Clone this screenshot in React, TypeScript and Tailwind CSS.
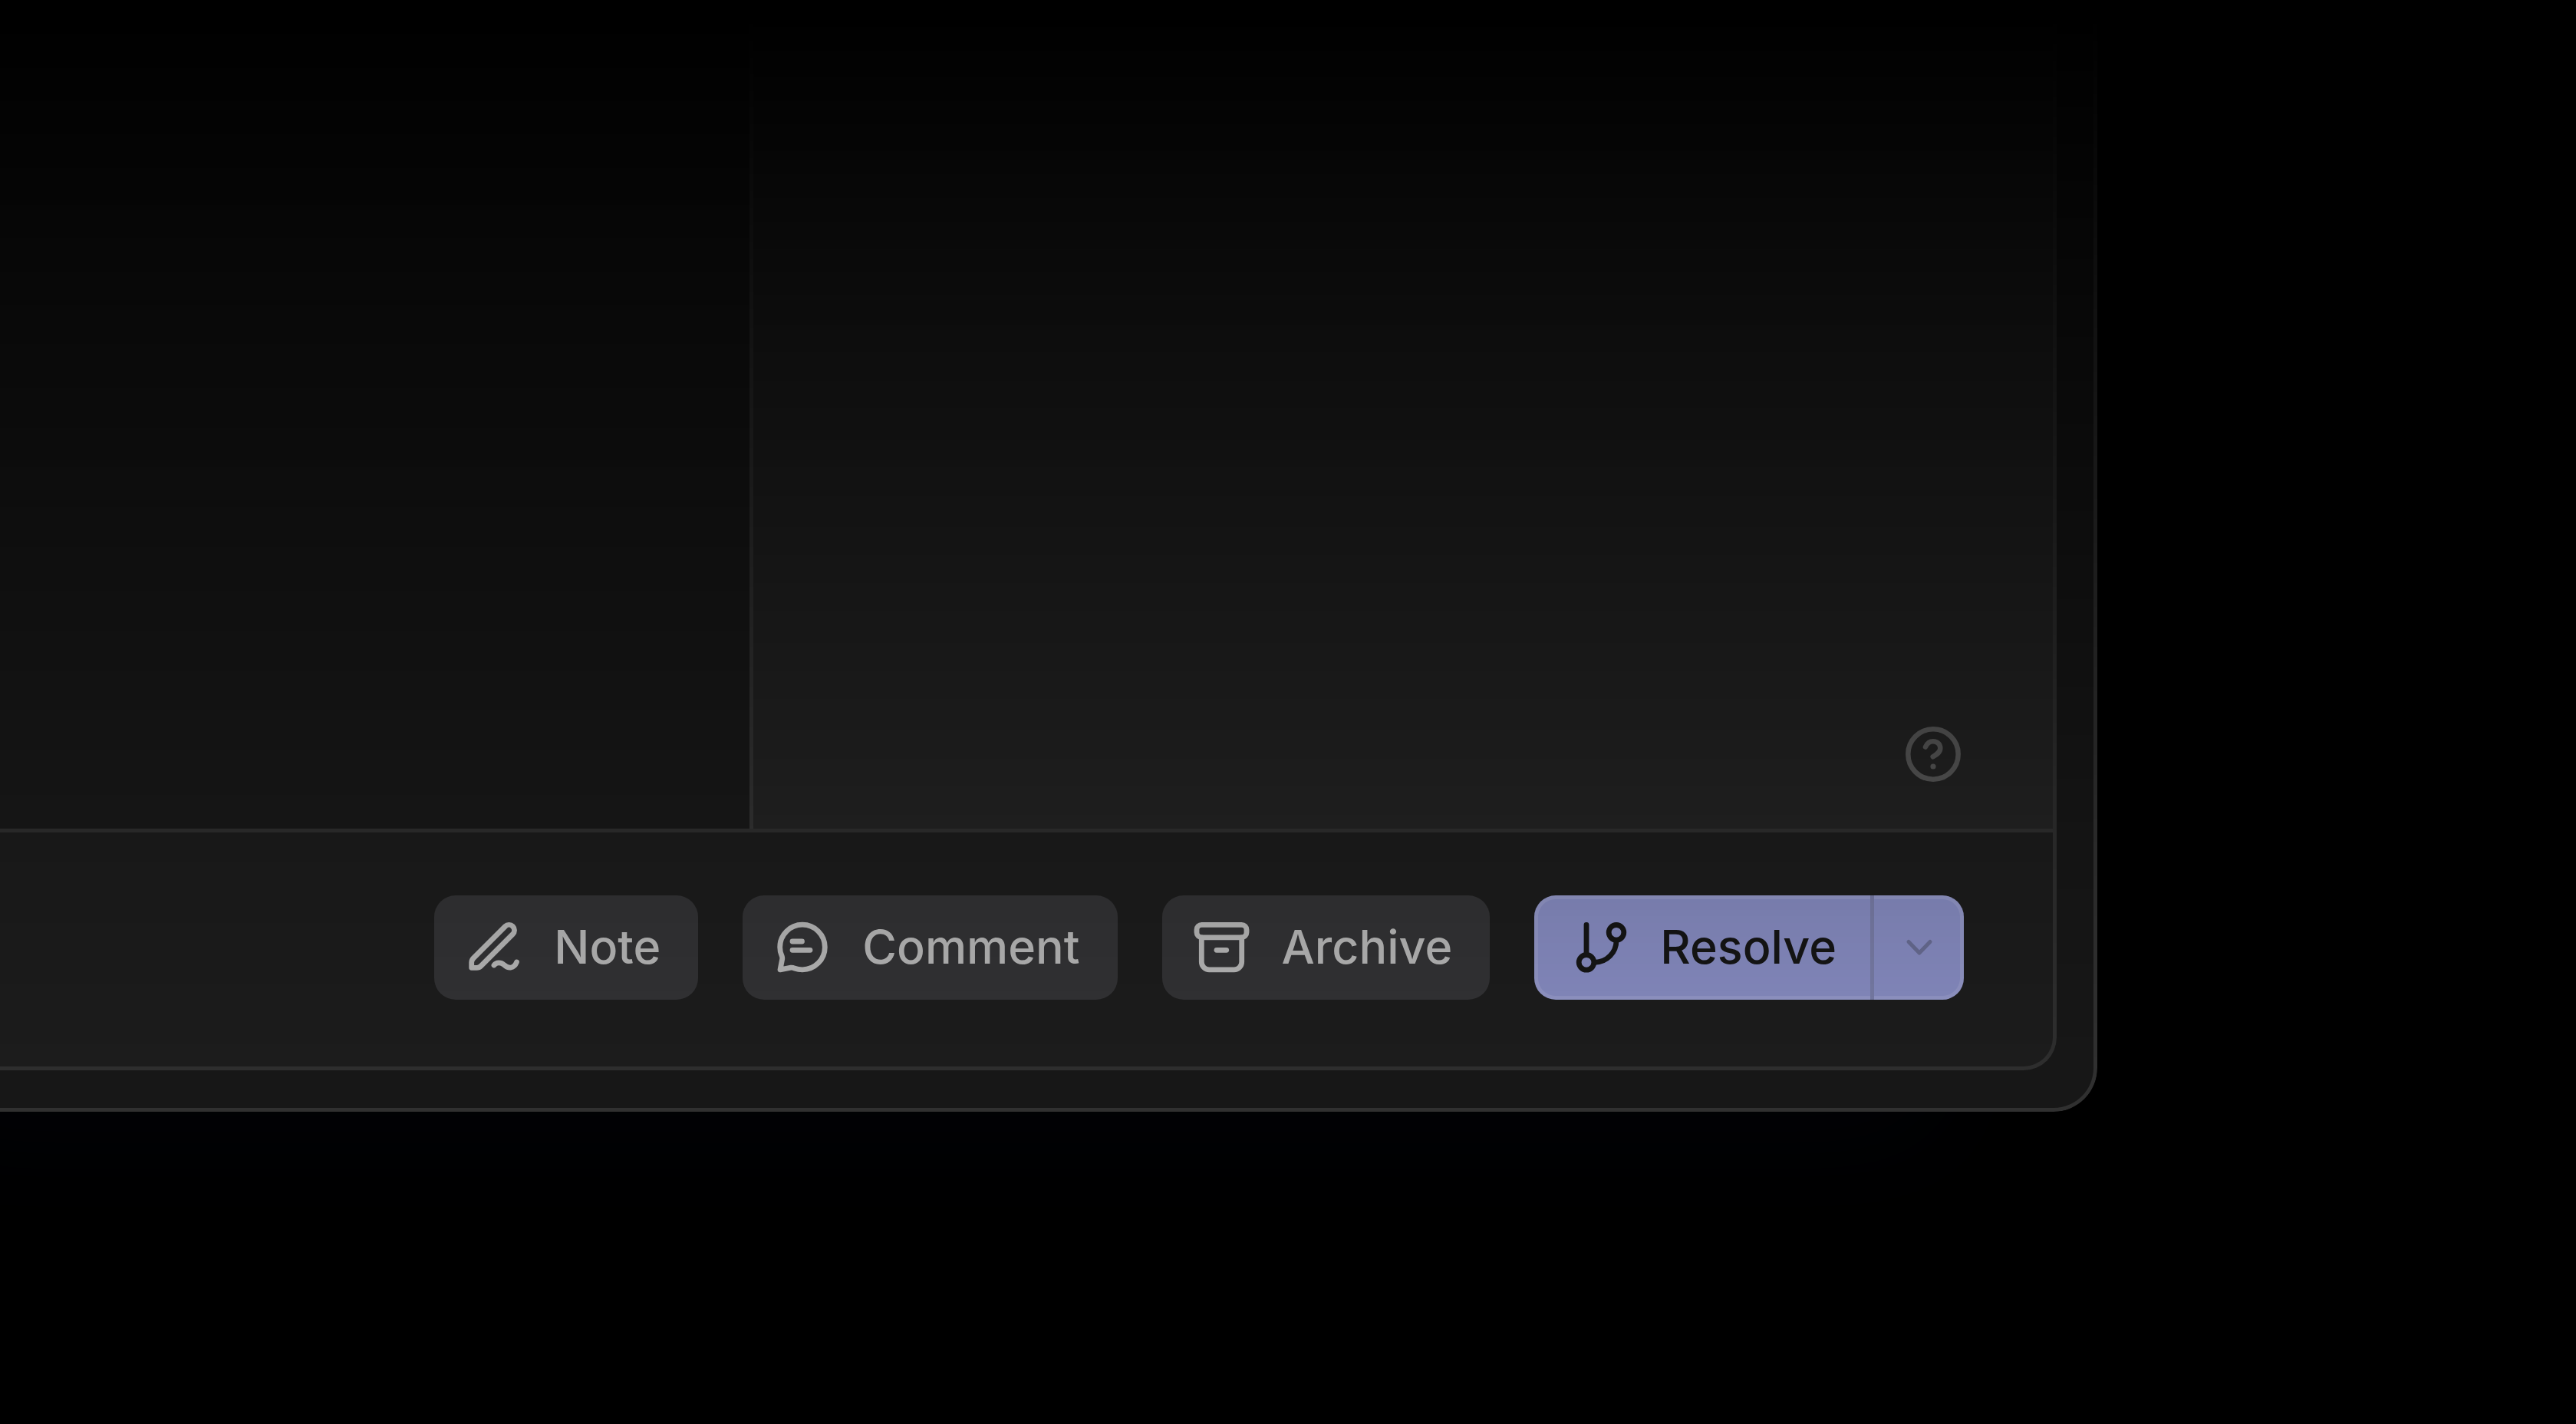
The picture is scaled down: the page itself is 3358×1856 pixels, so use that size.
import type { ReactNode } from "react";

function Icon({ children }: { children: ReactNode }) {
  return (
    <svg
      viewBox="0 0 80 80"
      className="size-20 shrink-0"
      fill="none"
      stroke="currentColor"
      strokeWidth="6.8"
      strokeLinecap="round"
      strokeLinejoin="round"
      aria-hidden="true"
    >
      {children}
    </svg>
  );
}

const actions = [
  {
    label: "Note",
    icon: (
      <Icon>
        <path d="M54.5 12.5 13 54Q10.7 56.3 10.7 59.5V66.3H17.5Q20.7 66.3 23 64L64.5 22.5A7 7 0 0 0 54.5 12.5Z" />
        <path d="M40 63C43 59 49 59 53 62.5C59 68 66 67.5 69.5 59" />
      </Icon>
    ),
  },
  {
    label: "Comment",
    icon: (
      <Icon>
        <path d="M40 68.8A29.3 29.3 0 1 0 10.7 39.5C10.7 44 11.5 47.5 13 50.5Q14 52.5 13.7 55L11 68.8L25 66.2Q27.5 66 29.5 67C33 68.2 36.5 68.8 40 68.8Z" />
        <path d="M27 32H39.5M27 43.3H50" />
      </Icon>
    ),
  },
  {
    label: "Archive",
    icon: (
      <Icon>
        <rect x="7" y="10.3" width="65" height="16.5" rx="6.5" />
        <path d="M13.3 27V58.8A10 10 0 0 0 23.3 68.8H55.7A10 10 0 0 0 65.7 58.8V27" />
        <path d="M33 43.3H45.7" />
      </Icon>
    ),
  },
];

export default function App() {
  return (
    <div className="flex min-h-screen flex-col overflow-hidden bg-black pr-[624px] pb-[407px] font-['Inter',sans-serif]">
      <div className="flex grow flex-col rounded-br-[57px] shadow-[-160px_80px_160px_-40px_rgba(20,40,90,0.08)]">
        <div className="flex grow flex-col rounded-br-[57px] border-r-5 border-b-5 border-[#303030] bg-[#171717] pr-12 pb-[49px] [mask-image:linear-gradient(to_bottom,transparent_20px,rgba(0,0,0,0.34)_400px,rgba(0,0,0,0.57)_700px,rgba(0,0,0,0.86)_1085px,black_1400px)]">
          <main className="flex grow flex-col overflow-hidden rounded-br-[43px] border-r-5 border-b-5 border-[#2e2e2e] bg-[#1c1c1c]">
            <div className="flex grow">
              <section className="grow bg-[#191919]" />
              <aside className="flex w-[1699px] items-end justify-end border-l-5 border-[#333333] bg-[#232323] pr-[120px] pb-[61px]">
                <button type="button" aria-label="Help" className="text-[#585858]">
                  <svg
                    viewBox="0 0 72 72"
                    className="size-18"
                    fill="none"
                    stroke="currentColor"
                    strokeWidth="6.5"
                    strokeLinecap="round"
                    aria-hidden="true"
                  >
                    <circle cx="36" cy="36" r="32.7" />
                    <path d="M26 26.5C28 22 31.5 19.3 36 19.3C41.5 19.3 45.3 23.3 45.3 28.3C45.3 33.5 41 36 35.7 39.3" />
                    <circle cx="36" cy="52" r="3.6" fill="currentColor" stroke="none" />
                  </svg>
                </button>
              </aside>
            </div>
            <footer className="flex justify-end gap-[58px] border-t-5 border-[#2f2f2f] pt-[82px] pr-[116px] pb-[87px]">
              {actions.map((action) => (
                <button
                  key={action.label}
                  type="button"
                  className="flex h-[136px] items-center gap-[38px] rounded-[28px] bg-[#323234] pr-[49px] pl-[38px] text-[61px] font-medium text-[#b4b4b4]"
                >
                  {action.icon}
                  {action.label}
                </button>
              ))}
              <div className="flex h-[136px] overflow-hidden rounded-[28px] bg-[#858abf] text-[#151515] inset-shadow-[0_0_0_5px_rgba(255,255,255,0.1)]">
                <button
                  type="button"
                  className="flex items-center gap-9 pr-11 pl-12 text-[61px] font-medium"
                >
                  <Icon>
                    <circle cx="20" cy="59.3" r="9.8" />
                    <circle cx="59" cy="20.3" r="9.8" />
                    <path d="M20 10.3V49M59 31C59 46.5 46.5 59.3 31 59.3" />
                  </Icon>
                  Resolve
                </button>
                <button
                  type="button"
                  aria-label="More resolve options"
                  className="flex w-[122px] items-center justify-center border-l-5 border-[#777ba5] text-[#676b91]"
                >
                  <svg
                    viewBox="0 0 40 40"
                    className="size-10"
                    fill="none"
                    stroke="currentColor"
                    strokeWidth="5"
                    strokeLinecap="round"
                    strokeLinejoin="round"
                    aria-hidden="true"
                  >
                    <path d="M6 12.5 20 27 34 12.5" />
                  </svg>
                </button>
              </div>
            </footer>
          </main>
        </div>
      </div>
    </div>
  );
}
